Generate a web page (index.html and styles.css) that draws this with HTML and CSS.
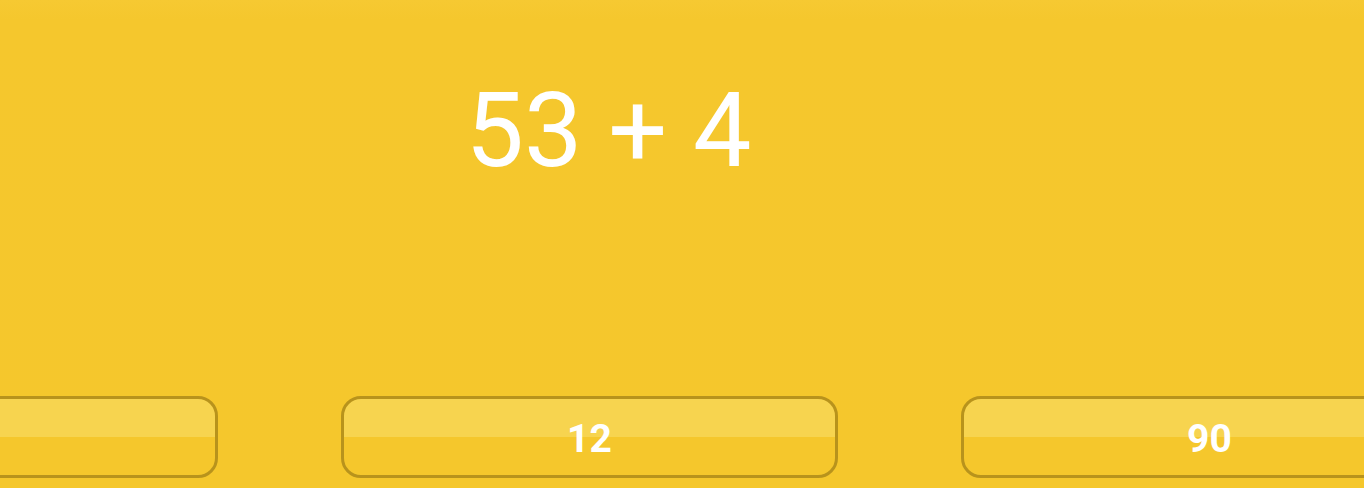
FILE: index.html
```html
<!DOCTYPE html>
<html>
<head>
<meta charset="utf-8">
<link rel="stylesheet" href="styles.css">
</head>
<body>
<main class="game">
  <div class="question"><span class="expr">53 + 4</span></div>
  <div class="answers">
    <div class="track">
      <button class="answer"></button>
      <button class="answer">12</button>
      <button class="answer">90</button>
    </div>
  </div>
</main>
</body>
</html>
```
FILE: styles.css
```css
html, body {
  margin: 0;
  padding: 0;
  height: 100%;
  overflow: hidden;
}
body {
  background: linear-gradient(to bottom, #f6c932 0, #f5c72d 20px, #f5c72c 100%);
  font-family: Roboto, "Liberation Sans", sans-serif;
}
.game {
  height: 488px;
  display: flex;
  flex-direction: column;
}
.question {
  display: flex;
  justify-content: center;
  padding-top: 79px;
  padding-right: 147px;
}
.expr {
  color: #ffffff;
  font-size: 104px;
  line-height: 1;
  font-weight: 400;
}
.answers {
  margin-top: auto;
  margin-bottom: 10px;
  overflow: hidden;
}
.track {
  margin-left: -279px;
  display: flex;
  gap: 123px;
}
.answer {
  flex: 0 0 497px;
  height: 82px;
  box-sizing: border-box;
  border: 3px solid #b8931c;
  border-radius: 20px;
  background: linear-gradient(to bottom, #f7d44f 0, #f7d44f 50%, #f5c72c 50%, #f5c72c 100%);
  color: #ffffff;
  font-family: Roboto, "Liberation Sans", sans-serif;
  font-weight: 700;
  font-size: 39px;
  padding: 3px 0 0;
  display: flex;
  align-items: center;
  justify-content: center;
}
```
